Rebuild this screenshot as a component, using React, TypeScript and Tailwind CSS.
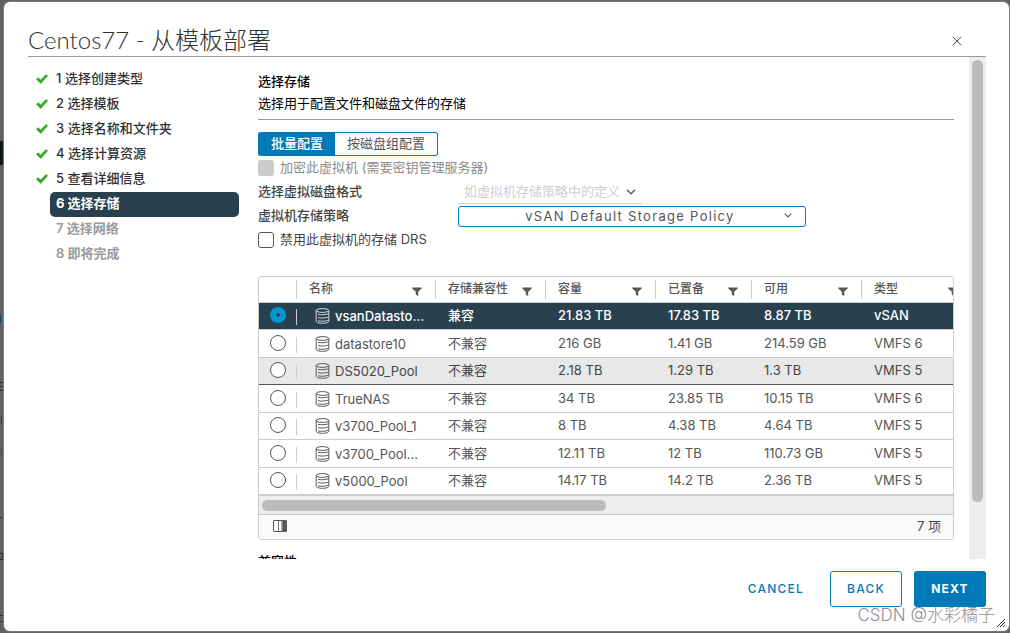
import { useState } from 'react';
import { X } from 'lucide-react';

const steps = [
  { id: 1, label: '选择创建类型' },
  { id: 2, label: '选择模板' },
  { id: 3, label: '选择名称和文件夹' },
  { id: 4, label: '选择计算资源' },
  { id: 5, label: '查看详细信息' },
  { id: 6, label: '选择存储' },
  { id: 7, label: '选择网络' },
  { id: 8, label: '即将完成' },
];

const currentStep = 6;

const columns = [
  { name: '名称', width: 'w-[139px]' },
  { name: '存储兼容性', width: 'w-[110px]' },
  { name: '容量', width: 'w-[110px]' },
  { name: '已置备', width: 'w-[96px]' },
  { name: '可用', width: 'w-[110px]' },
  { name: '类型', width: 'w-[110px]' },
];

const datastores = [
  { name: 'vsanDatasto…', compat: '兼容', capacity: '21.83 TB', provisioned: '17.83 TB', free: '8.87 TB', type: 'vSAN' },
  { name: 'datastore10', compat: '不兼容', capacity: '216 GB', provisioned: '1.41 GB', free: '214.59 GB', type: 'VMFS 6' },
  { name: 'DS5020_Pool', compat: '不兼容', capacity: '2.18 TB', provisioned: '1.29 TB', free: '1.3 TB', type: 'VMFS 5' },
  { name: 'TrueNAS', compat: '不兼容', capacity: '34 TB', provisioned: '23.85 TB', free: '10.15 TB', type: 'VMFS 6' },
  { name: 'v3700_Pool_1', compat: '不兼容', capacity: '8 TB', provisioned: '4.38 TB', free: '4.64 TB', type: 'VMFS 5' },
  { name: 'v3700_Pool…', compat: '不兼容', capacity: '12.11 TB', provisioned: '12 TB', free: '110.73 GB', type: 'VMFS 5' },
  { name: 'v5000_Pool', compat: '不兼容', capacity: '14.17 TB', provisioned: '14.2 TB', free: '2.36 TB', type: 'VMFS 5' },
];

const CheckIcon = () => (
  <svg viewBox="0 0 12 10" className="h-[10px] w-3" aria-hidden="true">
    <path d="M0.5 5.2 2.2 3.8 4.6 6 10.2 0.5 11.6 1.8 4.7 9.4Z" fill="#2fb41f" stroke="#1d8a12" strokeWidth="0.6" />
  </svg>
);

const FilterIcon = () => (
  <svg viewBox="0 0 10 9" className="h-[9px] w-[10px]" aria-hidden="true">
    <path d="M0.3 0.5H9.7V1.5L6.2 4.8V9L3.8 7.8V4.8L0.3 1.5Z" fill="#565656" />
  </svg>
);

const ChevronIcon = ({ className }: { className: string }) => (
  <svg viewBox="0 0 10 6" className={className} fill="none" stroke="#565656" strokeWidth="1.3" aria-hidden="true">
    <path d="M1 0.8 5 4.8 9 0.8" />
  </svg>
);

const DatastoreIcon = ({ selected }: { selected: boolean }) => (
  <svg
    viewBox="0 0 15 16"
    className="h-4 w-[15px] shrink-0"
    fill="none"
    stroke={selected ? '#d5dadd' : '#565656'}
    strokeWidth="1"
    aria-hidden="true"
  >
    <ellipse cx="7.5" cy="2.5" rx="6.3" ry="1.9" />
    <path d="M1.2 2.5V13.2C1.2 14.5 4 15.3 7.5 15.3S13.8 14.5 13.8 13.2V2.5" />
    <path d="M3 6.3C5.4 7 11 7 13.6 5.6M3 9.6C5.4 10.3 11 10.3 13.6 8.9M3 12.8C5.4 13.5 11 13.5 13.6 12.1" />
  </svg>
);

const ColumnsIcon = () => (
  <svg viewBox="0 0 14 12" className="h-3 w-[14px]" aria-hidden="true">
    <rect x="0.5" y="0.5" width="13" height="11" rx="0.5" fill="#fff" stroke="#565656" />
    <path d="M5.5 1V11" stroke="#737373" />
    <rect x="9.5" y="0.5" width="4" height="11" fill="#565656" />
    <path d="M9 1V11" stroke="#565656" />
  </svg>
);

const App = () => {
  const [selected, setSelected] = useState(0);

  return (
    <div className="relative flex h-screen overflow-hidden bg-[#626062] pt-[2px] pr-px pb-[2px] pl-1 font-['Inter','Noto_Sans_CJK_SC',sans-serif] text-[13px] leading-5 text-[#454545]">
      {/* Page behind the dialog */}
      <div className="absolute top-[141px] left-0 h-6 w-[3px] bg-[#0c161b]" />
      <div className="absolute top-[315px] left-0 h-2 w-px bg-[#164766]" />
      <svg viewBox="0 0 3 240" className="absolute top-[382px] left-0 h-[240px] w-[3px]" stroke="#2e2d2e" aria-hidden="true">
        <path d="M0 .5H3M0 4.5H3M0 8.5H3M0 135.5H2M0 171.5H3M0 177.5H3M2.5 171V178M0 233.5H3M0 239.5H3" />
        <path d="M1.5 34V42M1.5 67V74" stroke="#314a59" />
      </svg>

      <div
        role="dialog"
        aria-labelledby="dialog-title"
        className="relative flex min-w-0 flex-1 flex-col rounded-md bg-white pr-[23px] pb-6 pl-6 shadow-[0_0_2px_#bbb]"
      >
        <header className="flex h-[55px] shrink-0 items-end justify-between border-b border-[#9a9a9a]">
          <h1
            id="dialog-title"
            className="font-['Lato','Noto_Sans_CJK_SC',sans-serif] text-2xl leading-8 font-light text-[#313131]"
          >
            Centos77 - 从模板部署
          </h1>
          <button type="button" aria-label="关闭" className="mr-[21px] mb-[7px] text-[#565656]">
            <X className="h-4 w-4" strokeWidth={1.5} />
          </button>
        </header>

        <div className="flex min-h-0 flex-1">
          {/* Steps */}
          <nav className="w-[211px] shrink-0 pt-[10px]">
            <ol>
              {steps.map((step) => (
                <li key={step.id} className="flex h-[25px] items-center">
                  <span className="flex w-[22px] justify-end pr-[2px] pb-[2px]">
                    {step.id < currentStep && <CheckIcon />}
                  </span>
                  <button
                    type="button"
                    disabled={step.id > currentStep}
                    aria-current={step.id === currentStep ? 'step' : undefined}
                    className={`h-[25px] flex-1 rounded-[5px] px-[6px] pb-[3px] text-left ${
                      step.id === currentStep
                        ? 'bg-[#29404e] font-bold text-white'
                        : step.id > currentStep
                          ? 'font-semibold text-[#9a9a9a]'
                          : 'font-medium text-[#313131]'
                    }`}
                  >
                    {step.id} {step.label}
                  </button>
                </li>
              ))}
            </ol>
          </nav>

          {/* Step content */}
          <main className="ml-[19px] min-w-0 flex-1 overflow-hidden pt-[13px] pr-[15px]">
            <h2 className="leading-[22px] font-medium text-black">选择存储</h2>
            <p className="leading-[22px] text-black">选择用于配置文件和磁盘文件的存储</p>
            <hr className="mt-[5px] border-[#9a9a9a]" />

            <div className="mt-3 flex h-6">
              <button type="button" className="rounded-l-[3px] border border-r-0 border-[#0079b8] bg-[#0079b8] px-3 pb-[2px] font-medium text-white">
                批量配置
              </button>
              <button type="button" className="rounded-r-[3px] border border-l-0 border-[#0079b8] px-3 pb-[2px] text-[#565656]">
                按磁盘组配置
              </button>
            </div>

            <div className="flex h-6 items-center gap-[6px]">
              <input id="encrypt" type="checkbox" disabled className="h-4 w-4 appearance-none rounded-[3px] bg-[#ccc]" />
              <label htmlFor="encrypt" className="pb-[2px] text-[#8c8c8c]">加密此虚拟机 (需要密钥管理服务器)</label>
            </div>

            <div className="flex h-6 items-center">
              <label htmlFor="disk-format" className="w-[200px] pb-[2px] font-medium">选择虚拟磁盘格式</label>
              <div className="relative w-[184px]">
                <select id="disk-format" disabled className="block h-6 w-full appearance-none border-b border-[#d5d5d5] px-[6px] pb-[2px] text-[#cfcfcf] opacity-100">
                  <option>如虚拟机存储策略中的定义</option>
                </select>
                <ChevronIcon className="pointer-events-none absolute top-[9px] right-[6px] h-[6px] w-[10px]" />
              </div>
            </div>

            <div className="flex h-6 items-center">
              <label htmlFor="policy" className="w-[200px] pb-[2px] font-medium">虚拟机存储策略</label>
              <div className="relative w-1/2">
                <select
                  id="policy"
                  className="block h-[21px] w-full appearance-none rounded-[3px] border border-[#0079b8] pr-4 pl-3 leading-[19px] tracking-widest text-[#565656] [text-align-last:center]"
                >
                  <option>vSAN Default Storage Policy</option>
                </select>
                <ChevronIcon className="pointer-events-none absolute top-[7px] right-[14px] h-[5px] w-2" />
              </div>
            </div>

            <div className="flex h-6 items-center gap-[6px]">
              <input id="disable-drs" type="checkbox" className="h-4 w-4 appearance-none rounded-[3px] border border-[#565656] bg-white" />
              <label htmlFor="disable-drs" className="pb-[2px]">禁用此虚拟机的存储 DRS</label>
            </div>

            {/* Datastore grid */}
            <div className="mt-6 overflow-hidden rounded-[3px] border border-[#ccc]">
              <div className="overflow-hidden">
                <table className="w-[713px] table-fixed border-separate border-spacing-0">
                  <thead>
                    <tr className="h-[26px]">
                      <th className="w-[38px] border-b border-[#ccc] p-0">
                        <div className="ml-auto h-[19px] w-px bg-[#ccc]" />
                      </th>
                      {columns.map((col) => (
                        <th key={col.name} className={`border-b border-[#ccc] p-0 text-xs font-medium text-[#565656] ${col.width}`}>
                          <div className="flex h-[19px] items-center justify-between border-r border-[#ccc] pr-[13px] pl-3">
                            <span className="pb-[2px]">{col.name}</span>
                            <button type="button" aria-label={`筛选 ${col.name}`} className="pt-1">
                              <FilterIcon />
                            </button>
                          </div>
                        </th>
                      ))}
                    </tr>
                  </thead>
                  <tbody>
                    {datastores.map((ds, i) => {
                      const border = i === 2 ? 'border-b border-[#565656]' : 'border-b border-[#ccc]';
                      const cell = `pt-0 pr-0 pb-[2px] pl-3 ${border}`;
                      return (
                        <tr
                          key={ds.name}
                          className={`odd:h-[27px] even:h-7 ${
                            i === selected ? 'bg-[#29404e] font-medium text-white' : i === 2 ? 'bg-[#e8e8e8]' : 'text-[#565656]'
                          }`}
                        >
                          <td className={`p-0 ${border}`}>
                            <div className="flex items-start justify-between pl-[11px]">
                              <input
                                type="radio"
                                name="datastore"
                                aria-label={ds.name}
                                checked={i === selected}
                                onChange={() => setSelected(i)}
                                className="h-4 w-4 appearance-none rounded-full border border-[#565656] bg-white checked:border-[6px] checked:border-[#0095d3] checked:bg-[#29404e]"
                              />
                              <span className="mt-[2px] h-4 w-px bg-[#ccc]" />
                            </div>
                          </td>
                          <td className={`p-0 pl-3 ${border}`}>
                            <div className="flex items-center gap-[5px] pl-[6px]">
                              <DatastoreIcon selected={i === selected} />
                              <span className="whitespace-nowrap">{ds.name}</span>
                            </div>
                          </td>
                          <td className={cell}>{ds.compat}</td>
                          <td className={cell}>{ds.capacity}</td>
                          <td className={cell}>{ds.provisioned}</td>
                          <td className={cell}>{ds.free}</td>
                          <td className={cell}>{ds.type}</td>
                        </tr>
                      );
                    })}
                  </tbody>
                </table>
              </div>
              <div className="border-y border-[#ccc] bg-[#ededed] px-[3px] pt-1 pb-[3px]">
                <div className="h-[11px] w-1/2 rounded-full bg-[#bbb]" />
              </div>
              <div className="flex h-6 items-center justify-between bg-[#fafafa] pr-3 pb-[2px] pl-[14px]">
                <button type="button" aria-label="显示列">
                  <ColumnsIcon />
                </button>
                <span>7 项</span>
              </div>
            </div>

            <h3 className="mt-[11px] font-medium text-black">兼容性</h3>
          </main>

          {/* Scrollbar */}
          <div className="w-[17px] shrink-0 bg-[#ededed] px-[3px] pt-[3px] pb-[57px]">
            <div className="h-full rounded-full bg-[#bbb]" />
          </div>
        </div>

        <footer className="flex h-12 shrink-0 items-end justify-end gap-3 text-xs font-medium tracking-widest">
          <button type="button" className="h-9 px-[14px] text-[#0079b8]">CANCEL</button>
          <button type="button" className="h-9 w-[72px] rounded-[3px] border border-[#0079b8] text-[#0079b8]">BACK</button>
          <button type="button" className="h-9 w-[72px] rounded-[3px] bg-[#0079b8] font-bold text-white">NEXT</button>
        </footer>

        <svg viewBox="0 0 8 8" className="absolute right-1 bottom-1 h-2 w-2" stroke="#333" strokeWidth="1" aria-hidden="true">
          <path d="M0 8 8 0M3 8 8 3M6 8 8 6" />
        </svg>
      </div>

      <span className="pointer-events-none absolute right-[15px] bottom-[6px] text-[17px] leading-6 font-light text-[#8f8f8f] [text-shadow:1px_1px_0_#fff]">
        CSDN @水彩橘子
      </span>
    </div>
  );
};

export default App;
